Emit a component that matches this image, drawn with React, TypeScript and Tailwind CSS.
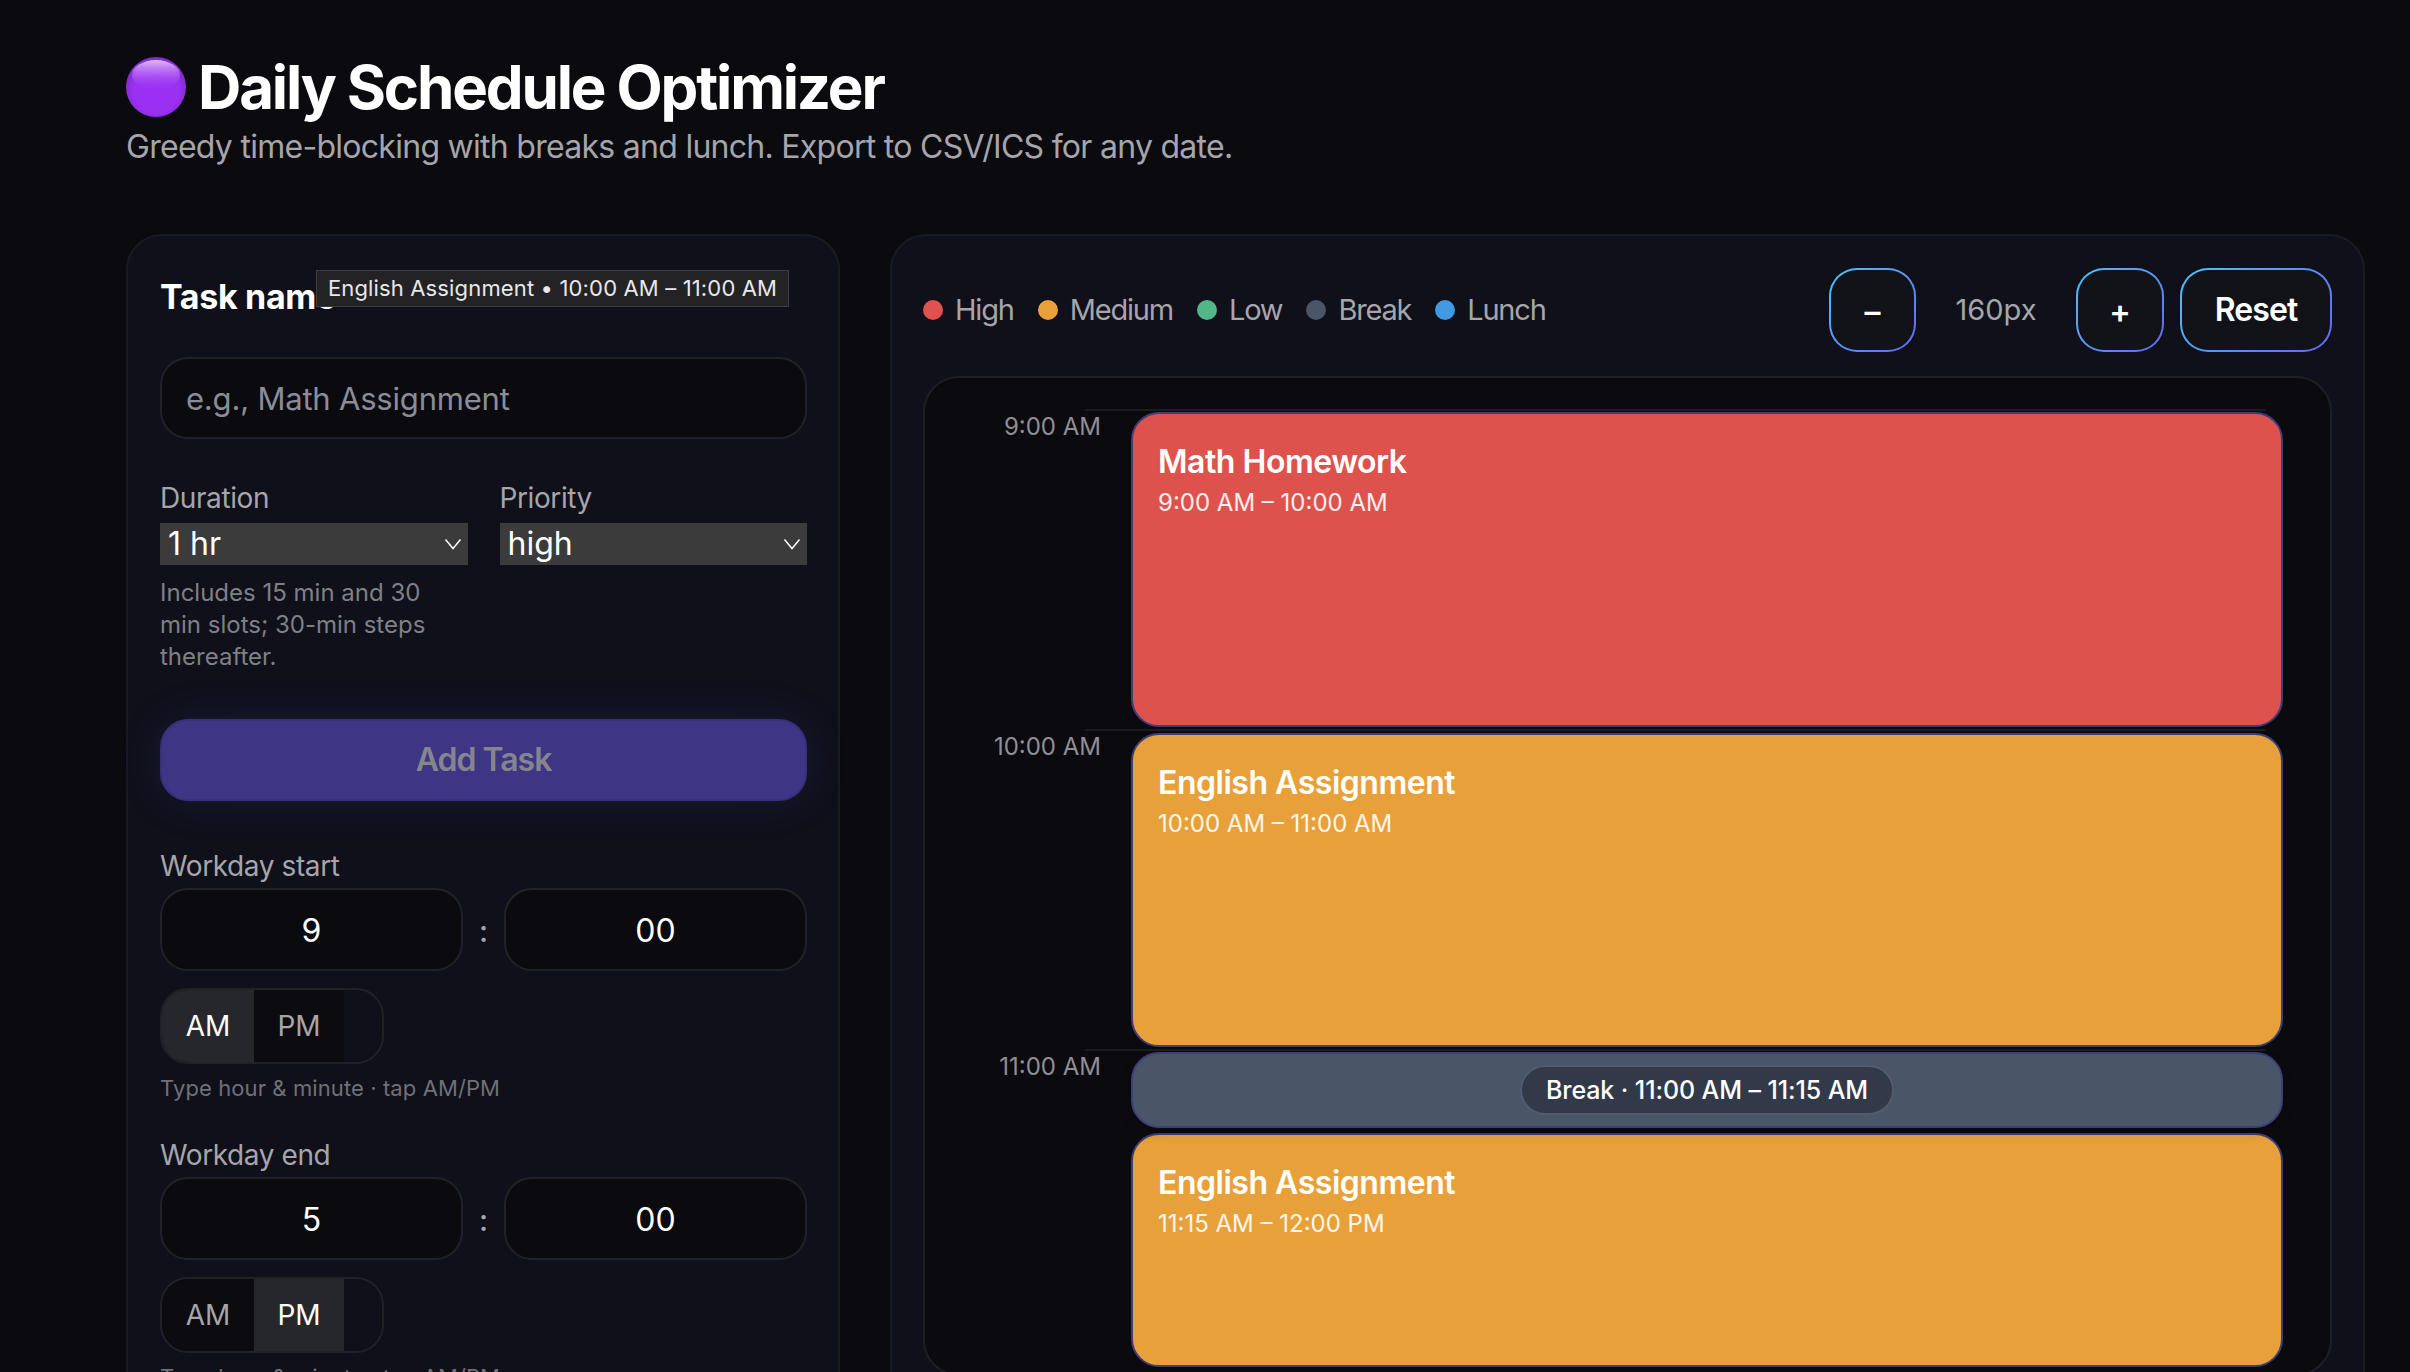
import React from "react";

const gradientBtn =
  "flex items-center justify-center h-[84px] rounded-[28px] border-2 border-transparent bg-[linear-gradient(#121318,#121318),linear-gradient(135deg,#4fc3f7,#6366f1)] [background-origin:border-box] [background-clip:padding-box,border-box] text-white text-[32px] font-semibold";

function Chevron() {
  return (
    <svg className="absolute right-[6px] top-[15px] pointer-events-none" width="18" height="12" viewBox="0 0 18 12" fill="none">
      <path d="M1.5 1.5 L9 10.5 L16.5 1.5" stroke="#ffffff" strokeWidth="1.5" />
    </svg>
  );
}

function Select({ label, value, options }: { label: string; value: string; options: string[] }) {
  return (
    <div className="relative">
      <select
        aria-label={label}
        defaultValue={value}
        className="block w-full h-[42px] appearance-none bg-[#3b3b3b] text-white text-[32px] leading-[42px] pl-[8px] rounded-none outline-none"
      >
        {options.map((o) => (
          <option key={o}>{o}</option>
        ))}
      </select>
      <Chevron />
    </div>
  );
}

function TimeField({ label, hour, period }: { label: string; hour: string; period: "AM" | "PM" }) {
  const seg = (name: "AM" | "PM", w: string) => (
    <div
      className={`${w} h-full flex items-center justify-center text-[28px] font-normal ${
        period === name ? "bg-[#26272c] text-white" : "bg-[#0b0b10] text-[#a5a5ab]"
      }`}
    >
      {name}
    </div>
  );
  const box =
    "flex-1 h-[83px] pt-[3px] rounded-[28px] border-2 border-[#212228] bg-[#0a0a0f] flex items-center justify-center text-white text-[32px]";
  return (
    <div>
      <div className="text-[#a5a5ab] text-[28px] leading-[40px] tracking-[-0.4px]">{label}</div>
      <div className="mt-[2px] flex items-center">
        <div className={box}>{hour}</div>
        <div className="w-[41px] pt-[3px] text-center text-[#a5a5ab] text-[30px] font-medium">:</div>
        <div className={box}>00</div>
      </div>
      <div className="mt-[17px] w-[224px] h-[76px] flex rounded-[28px] border-2 border-[#212228] overflow-hidden">
        {seg("AM", "w-[92px]")}
        {seg("PM", "w-[90px]")}
      </div>
      <div className="mt-[10px] text-[#6f7078] text-[22px] leading-[28px] tracking-[0.1px]">Type hour &amp; minute · tap AM/PM</div>
    </div>
  );
}

function Legend({ color, label }: { color: string; label: string }) {
  return (
    <div className="flex items-center gap-[12px]">
      <span className={`w-[20px] h-[20px] rounded-full ${color}`} />
      <span className="text-[#a5a5ab] text-[29px] leading-[40px] tracking-[-1.2px]">{label}</span>
    </div>
  );
}

function HourRow({ label }: { label: string }) {
  return (
    <div className="relative h-[320px]">
      <div className="absolute left-[160px] right-[64px] top-0 h-[2px] bg-[#1c1d22]" />
      <div className="w-[176px] text-right text-[#8f8f95] text-[24px] leading-[36px]">{label}</div>
    </div>
  );
}

function Block({ title, time, h, mt, color }: { title: string; time: string; h: string; mt: string; color: string }) {
  return (
    <div className={`${h} ${mt} ${color} rounded-[28px] border-2 border-[#3d3f78] px-[25px] pt-[26px]`}>
      <div className="text-white text-[32px] leading-[44px] font-semibold tracking-[-0.015em]">{title}</div>
      <div className="mt-[1px] text-white/90 text-[24px] leading-[36px]">{time}</div>
    </div>
  );
}

export default function App() {
  return (
    <div className="h-screen overflow-hidden bg-[#0a0a0f] font-['Inter',sans-serif] pl-[126px] pr-[45px] pt-[51px]">
      <h1 className="flex items-center h-[72px] text-white text-[60px] font-bold tracking-[-2.15px]">
        <svg className="mr-[12px]" width="60" height="60" viewBox="0 0 60 60">
          <defs>
            <radialGradient id="orb" cx="50%" cy="55%" r="55%">
              <stop offset="0%" stopColor="#9d2ff5" />
              <stop offset="70%" stopColor="#9a30f2" />
              <stop offset="100%" stopColor="#7d2bc4" />
            </radialGradient>
            <linearGradient id="shine" x1="0" y1="0" x2="0" y2="1">
              <stop offset="0%" stopColor="#e3c3fb" stopOpacity="0.95" />
              <stop offset="100%" stopColor="#a33ff5" stopOpacity="0" />
            </linearGradient>
          </defs>
          <circle cx="30" cy="30" r="30" fill="url(#orb)" />
          <ellipse cx="30" cy="18" rx="24" ry="15" fill="url(#shine)" />
        </svg>
        Daily Schedule Optimizer
      </h1>
      <p className="text-[#a5a5ab] text-[32px] leading-[48px] tracking-[-0.72px]">
        Greedy time-blocking with breaks and lunch. Export to CSV/ICS for any date.
      </p>

      <div className="mt-[63px] flex gap-[50px] items-start">
        {/* Left card */}
        <div className="relative w-[714px] shrink-0 h-[1200px] rounded-[36px] border-2 border-[#1a1b21] bg-[#0f1019] pl-[32px] pr-[31px] py-[32px]">
          <div className="mt-[2px] text-white text-[34px] leading-[54px] font-bold tracking-[-0.01em]">Task name</div>
          <div className="absolute left-[188px] top-[34px] h-[37px] w-[473px] flex items-center justify-center bg-[#232326] border border-[#3d3d40] text-[#e8e8ea] text-[22px] tracking-[0.15px] whitespace-nowrap">
            English Assignment • 10:00 AM – 11:00 AM
          </div>
          <input
            placeholder="e.g., Math Assignment"
            className="mt-[33px] block w-full h-[82px] rounded-[28px] border-2 border-[#212228] bg-[#0a0a0f] px-[24px] text-[31px] tracking-[-0.2px] text-white placeholder:text-[#8a8d97] outline-none"
          />
          <div className="mt-[39px] grid grid-cols-2 gap-[32px]">
            <div>
              <div className="text-[#a5a5ab] text-[28px] leading-[40px] tracking-[-0.4px] mb-[5px]">Duration</div>
              <Select label="Duration" value="1 hr" options={["15 min", "30 min", "1 hr"]} />
              <div className="mt-[12px] text-[#7f8087] text-[24px] leading-[32px]">
                Includes 15 min and 30 min slots; 30-min steps thereafter.
              </div>
            </div>
            <div>
              <div className="text-[#a5a5ab] text-[28px] leading-[40px] tracking-[-0.4px] mb-[5px]">Priority</div>
              <Select label="Priority" value="high" options={["high", "medium", "low"]} />
            </div>
          </div>
          <button className="mt-[46px] block w-full h-[82px] rounded-[28px] border-2 border-[#38307a] bg-[#3f3585] text-[#85858f] text-[32px] font-semibold tracking-[-1px] shadow-[0_0_44px_rgba(99,102,241,0.13)]">
            Add Task
          </button>
          <div className="mt-[45px] flex flex-col gap-[33px]">
            <TimeField label="Workday start" hour="9" period="AM" />
            <TimeField label="Workday end" hour="5" period="PM" />
          </div>
        </div>

        {/* Right card */}
        <div className="flex-1 h-[1200px] rounded-[36px] border-2 border-[#1a1b21] bg-[#0f1019] px-[31px] py-[32px]">
          <div className="flex items-center justify-between">
            <div className="flex items-center gap-[24px]">
              <Legend color="bg-[#e0524f]" label="High" />
              <Legend color="bg-[#e8a13a]" label="Medium" />
              <Legend color="bg-[#52b788]" label="Low" />
              <Legend color="bg-[#4a5568]" label="Break" />
              <Legend color="bg-[#4299e1]" label="Lunch" />
            </div>
            <div className="flex items-center">
              <button className={`${gradientBtn} w-[87px] pt-[3px] font-bold`}>–</button>
              <div className="w-[160px] text-center text-[#a5a5ab] text-[29px]">160px</div>
              <button className={`${gradientBtn} w-[88px] mr-[16px] pt-[3px] font-bold`}>+</button>
              <button className={`${gradientBtn} w-[152px] tracking-[-0.9px]`}>Reset</button>
            </div>
          </div>
          <div className="relative mt-[24px] rounded-[36px] border-2 border-[#1e1f24] bg-[#0a0a0f] pt-[31px] h-[1000px]">
            <HourRow label="9:00 AM" />
            <HourRow label="10:00 AM" />
            <HourRow label="11:00 AM" />
            <div className="absolute left-[206px] right-[47px] top-[34px] flex flex-col">
              <Block title="Math Homework" time="9:00 AM – 10:00 AM" h="h-[315px]" mt="" color="bg-[#de524e]" />
              <Block title="English Assignment" time="10:00 AM – 11:00 AM" h="h-[314px]" mt="mt-[6px]" color="bg-[#e8a13a]" />
              <div className="relative z-10 mt-[5px] h-[76px] rounded-[28px] border-2 border-[#3d3f78] bg-[#4a5568] flex items-center justify-center shadow-[0_6px_14px_rgba(0,0,0,0.12)]">
                <div className="h-[50px] px-[24px] pt-[2px] rounded-full border-2 border-[#525c6e] bg-[#323a49] text-white text-[25px] font-medium tracking-[-0.1px] flex items-center whitespace-nowrap">
                  Break · 11:00 AM – 11:15 AM
                </div>
              </div>
              <Block title="English Assignment" time="11:15 AM – 12:00 PM" h="h-[234px]" mt="mt-[5px]" color="bg-[#e8a13a]" />
            </div>
          </div>
        </div>
      </div>
    </div>
  );
}
